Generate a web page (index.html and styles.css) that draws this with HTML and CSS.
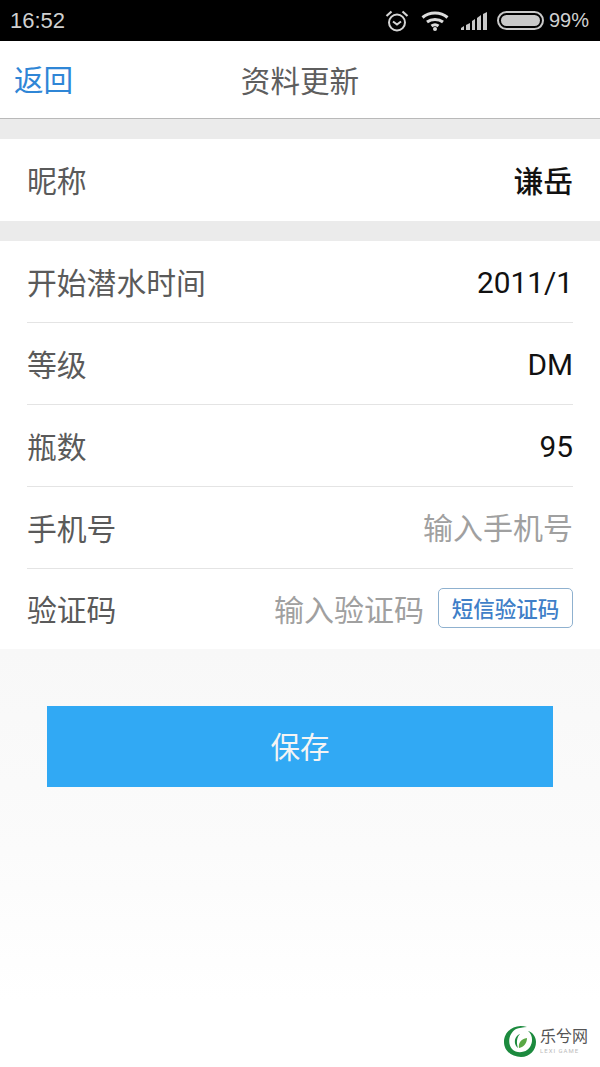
FILE: index.html
```html
<!DOCTYPE html>
<html lang="zh-CN">
<head>
    <meta charset="UTF-8">
    <title>资料更新</title>
    <link rel="stylesheet" href="styles.css">
</head>
<body>

<div class="status-bar">
    <span class="clock">16:52</span>
    <div class="status-icons">
        <svg class="icon-alarm" width="24" height="24" viewBox="0 0 24 24" fill="none" stroke="#d4d4d4">
            <circle cx="12" cy="13.500" r="8" stroke-width="2"/>
            <path d="M8 12.500l4 3 4-3" stroke-width="2"/>
            <path d="M1.500 7l5-4.500M22.500 7l-5-4.500" stroke-width="2.200"/>
        </svg>
        <svg class="icon-wifi" width="28" height="20" viewBox="0 0 28 20" fill="none" stroke="#dcdcdc" stroke-width="3">
            <path d="M1.500 6.500c7-6 18-6 25 0"/>
            <path d="M6 11c4.500-3.500 11.500-3.500 16 0"/>
            <path d="M10.500 15c2-1.500 5-1.500 7 0"/>
            <circle cx="14" cy="18" r="2" fill="#dcdcdc" stroke="none"/>
        </svg>
        <svg class="icon-signal" width="28" height="20" viewBox="0 0 28 20" fill="#c8c8c8">
            <polygon points="1,19 1,17 4,15 4,19"/>
            <polygon points="6,19 6,14 10,12 10,19"/>
            <polygon points="12,19 12,10 15,8 15,19"/>
            <polygon points="17,19 17,7 21,4 21,19"/>
            <polygon points="23,19 23,3 27,1 27,19"/>
        </svg>
        <div class="battery"><div class="battery-fill"></div></div>
        <span class="battery-text">99%</span>
    </div>
</div>

<div class="nav-bar">
    <a class="back">返回</a>
    <div class="nav-title">资料更新</div>
</div>

<div class="groups">
    <div class="group">
        <div class="row">
            <span class="label">昵称</span>
            <span class="value-bold">谦岳</span>
        </div>
    </div>

    <div class="group">
        <div class="row">
            <span class="label">开始潜水时间</span>
            <span class="value">2011/1</span>
        </div>
        <div class="row">
            <span class="label">等级</span>
            <span class="value">DM</span>
        </div>
        <div class="row">
            <span class="label">瓶数</span>
            <span class="value">95</span>
        </div>
        <div class="row">
            <span class="label">手机号</span>
            <span class="placeholder">输入手机号</span>
        </div>
        <div class="row">
            <span class="label">验证码</span>
            <div class="code-box">
                <span class="placeholder">输入验证码</span>
                <button class="code-btn">短信验证码</button>
            </div>
        </div>
    </div>
</div>

<div class="save-wrap">
    <button class="save-btn">保存</button>
</div>

<div class="watermark">
    <svg width="34" height="34" viewBox="0 0 34 34">
        <path d="M24 3C12-1 1 7 1 18c0 9 8 15 17 15 9 0 15-7 15-15 0-6-4-10-8-11 5 4 5 11 2 16-4 6-13 7-18 2C4 19 6 9 13 5c3-1 7-2 11-2z" fill="#1c8a3e"/>
        <path d="M15 24c-4-3-4-9-1-12 1-1 2-2 3-2-3 3-4 8-2 14z" fill="#1c8a3e"/>
        <path d="M16 24c-1-5 2-9 8-10 0 5-3 9-8 10z" fill="#5aa845"/>
    </svg>
    <div class="mark-text">
        <div class="mark-name">乐兮网</div>
        <div class="mark-sub">LEXI GAME</div>
    </div>
</div>

</body>
</html>
```

FILE: styles.css
```css
* {
    box-sizing: border-box;
}
html, body {
    margin: 0;
    height: 1067px;
    overflow: hidden;
}
body {
    font-family: Roboto, "Noto Sans CJK SC", sans-serif;
    background: linear-gradient(#f8f8f8 650px, #fbfbfb 850px, #ffffff 1000px);
    position: relative;
}
.status-bar {
    height: 41px;
    background: #000;
    color: #d0d0d0;
    display: flex;
    justify-content: space-between;
    align-items: center;
    padding: 0 11px 0 10px;
    font-family: "Liberation Sans", sans-serif;
}
.clock {
    font-size: 22px;
}
.status-icons {
    display: flex;
    align-items: center;
}
.icon-alarm {
    margin-right: 12px;
}
.icon-wifi {
    margin-right: 11px;
}
.icon-signal {
    margin-right: 9px;
}
.battery {
    width: 47px;
    height: 19px;
    border: 2px solid #c8c8c8;
    border-radius: 10px;
    padding: 2px;
    margin-right: 5px;
}
.battery-fill {
    height: 100%;
    background: #c8c8c8;
    border-radius: 6px;
}
.battery-text {
    font-size: 20px;
}
.nav-bar {
    height: 78px;
    background: #fff;
    border-bottom: 1px solid #b9b9b9;
    display: flex;
    align-items: center;
    justify-content: center;
    position: relative;
}
.back {
    position: absolute;
    left: 14px;
    top: 22px;
    font-size: 29.600px;
    line-height: 36px;
    color: #2f86d6;
}
.nav-title {
    font-size: 29.600px;
    color: #5e5e5e;
}
.groups {
    background: #ebebeb;
    padding-top: 20px;
    display: flex;
    flex-direction: column;
    gap: 20px;
}
.group {
    background: #fff;
    padding: 0 27px;
}
.row {
    height: 82px;
    display: flex;
    justify-content: space-between;
    align-items: center;
    border-bottom: 1px solid #e4e4e4;
    font-size: 29.800px;
}
.row:last-child {
    border-bottom: none;
}
.group:last-child .row:last-child {
    height: 80px;
}
.label {
    color: #5a5a5a;
    padding-bottom: 2px;
}
.value {
    color: #111;
    padding-top: 2px;
}
.value-bold {
    color: #111;
    font-weight: 500;
    padding-bottom: 2px;
}
.placeholder {
    color: #a0a0a0;
    font-size: 30px;
    padding-bottom: 3px;
}
.code-box {
    display: flex;
    align-items: center;
    gap: 14px;
}
.code-btn {
    width: 135px;
    height: 40px;
    margin-bottom: 2px;
    padding: 0 0 2px;
    background: #fff;
    border: 1px solid #8fb1cf;
    border-radius: 5px;
    color: #3f7fc8;
    font-family: inherit;
    font-size: 21.500px;
    font-weight: 500;
}
.save-wrap {
    padding: 57px 47px 0;
}
.save-btn {
    display: block;
    width: 100%;
    height: 81px;
    padding: 0 0 3px;
    background: #31a9f4;
    border: none;
    color: #f4f4f4;
    font-family: inherit;
    font-size: 29.600px;
}
.watermark {
    position: absolute;
    left: 503px;
    top: 1024px;
    display: flex;
    align-items: center;
    gap: 3px;
}
.mark-name {
    font-size: 16px;
    line-height: 20px;
    color: #555;
}
.mark-sub {
    font-size: 6px;
    line-height: 8px;
    letter-spacing: 1px;
    color: #bbb;
    white-space: nowrap;
}
```
